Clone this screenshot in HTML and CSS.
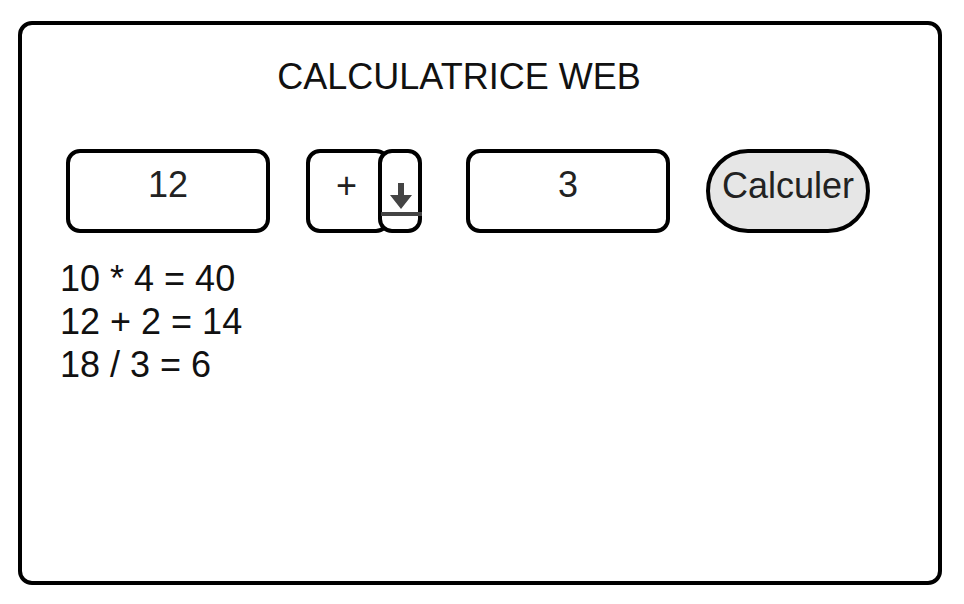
FILE: index.html
```html
<!DOCTYPE html>
<html lang="fr">
<head>
<meta charset="utf-8">
<title>Calculatrice web</title>
<link rel="stylesheet" href="styles.css">
</head>
<body>
<main class="card">
  <h1 class="title">CALCULATRICE WEB</h1>
  <form class="form">
    <input class="control field" type="text" inputmode="numeric" value="12" aria-label="Premier nombre">
    <div class="operator">
      <select class="control operator-select" aria-label="Opération">
        <option>+</option>
        <option>-</option>
        <option>*</option>
        <option>/</option>
      </select>
      <svg class="operator-arrow" viewBox="0 0 44 84" aria-hidden="true">
        <rect x="2" y="2" width="40" height="80" rx="12" fill="#fff" stroke="#000" stroke-width="4"/>
        <path d="M3 65H44" stroke="#444" stroke-width="4"/>
        <path d="M20 34h6v12h8L23 60L12 46h8z" fill="#444"/>
      </svg>
    </div>
    <input class="control field" type="text" inputmode="numeric" value="3" aria-label="Second nombre">
    <button class="control submit" type="button">Calculer</button>
  </form>
  <ul class="results">
    <li>10 * 4 = 40</li>
    <li>12 + 2 = 14</li>
    <li>18 / 3 = 6</li>
  </ul>
</main>
</body>
</html>
```
FILE: styles.css
```css
* {
  box-sizing: border-box;
}

body {
  display: flex;
  min-height: 100vh;
  margin: 0;
  padding: 21px 22px 19px 18px;
  background: #fff;
  color: #111;
  font: 36px/43px "Liberation Sans", Arial, sans-serif;
}

.card {
  flex: 1;
  min-width: 0;
  padding: 30px 68px 30px 38px;
  border: 4px solid #000;
  border-radius: 14px;
}

.title {
  margin: 0 12px 51px 0;
  font: inherit;
  text-align: center;
}

.form {
  display: flex;
  gap: 36px;
  margin-left: 6px;
}

.control {
  height: 84px;
  margin: 0;
  padding: 0 0 12px;
  border: 4px solid #000;
  border-radius: 14px;
  background: #fff;
  color: #222;
  font: inherit;
}

.field {
  flex: 1;
  width: 0;
  min-width: 0;
  text-align: center;
}

.operator {
  display: flex;
  flex: none;
  margin-right: 8px;
}

.operator-select {
  width: 84px;
  padding-left: 26px;
  appearance: none;
}

.operator-arrow {
  width: 44px;
  height: 84px;
  margin-left: -12px;
  pointer-events: none;
}

.submit {
  flex: none;
  width: 164px;
  border-radius: 42px;
  background: #e6e6e6;
  white-space: nowrap;
}

.results {
  margin: 24px 0 0;
  padding: 0;
  list-style: none;
}
```
